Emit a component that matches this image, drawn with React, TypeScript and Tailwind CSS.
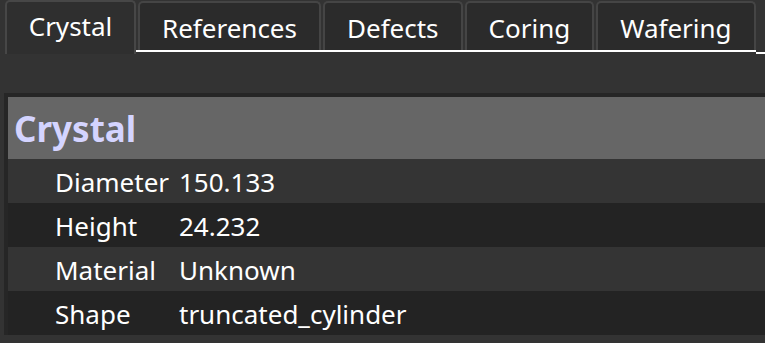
const tabs = ['Crystal', 'References', 'Defects', 'Coring', 'Wafering']

const rows = [
  { label: 'Diameter', value: '150.133' },
  { label: 'Height', value: '24.232' },
  { label: 'Material', value: 'Unknown' },
  { label: 'Shape', value: 'truncated_cylinder' },
]

export default function App() {
  return (
    <div
      className="h-[343px] w-[765px] overflow-hidden bg-[#333333] text-white"
      style={{ fontFamily: '"Noto Sans", "Open Sans", sans-serif' }}
    >
      {/* tab bar */}
      <div className="flex h-[54px] items-end pl-[5px]">
        {tabs.map((tab, i) =>
          i === 0 ? (
            <div
              key={tab}
              className="flex h-[54px] w-[131px] shrink-0 items-center justify-center rounded-t-[5px] border-2 border-b-0 border-[#474747] bg-[#2f2f2f] pb-[4px] text-[26px]"
            >
              {tab}
            </div>
          ) : (
            <div key={tab} className="flex h-[53px] shrink-0 flex-col">
              <div className="ml-[2px] flex h-[49px] items-center rounded-t-[5px] border-2 border-b-0 border-[#454545] bg-[#2b2b2b] px-[22px] pt-[4px] text-[26px]">
                {tab}
              </div>
              <div className="h-[2px] bg-white" />
            </div>
          ),
        )}
        <div className="flex h-[53px] flex-1 flex-col justify-end">
          <div className="h-[2px] bg-white" />
        </div>
      </div>

      {/* property panel */}
      <div className="mt-[39px] ml-[4px] border-l-[4px] border-t-[4px] border-[#262626]">
        <div className="flex h-[62px] items-center bg-[#666666] pl-[6px] pt-[2px] text-[35px] font-bold text-[#d4d4ff]">
          Crystal
        </div>
        {rows.map((row, i) => (
          <div
            key={row.label}
            className={`flex h-[44px] items-center pt-[2px] text-[26px] ${i % 2 === 0 ? 'bg-[#343434]' : 'bg-[#232323]'}`}
          >
            <span className="w-[171px] shrink-0 pl-[47px]">{row.label}</span>
            <span>{row.value}</span>
          </div>
        ))}
      </div>
    </div>
  )
}
